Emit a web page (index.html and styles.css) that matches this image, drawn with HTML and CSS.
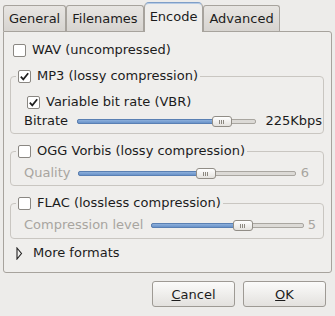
FILE: index.html
```html
<!DOCTYPE html>
<html>
<head>
<meta charset="utf-8">
<link rel="stylesheet" href="styles.css">
</head>
<body>
<div class="window">
  <div class="tabs">
    <div class="tab">General</div>
    <div class="tab">Filenames</div>
    <div class="tab active">Encode</div>
    <div class="tab">Advanced</div>
  </div>
  <div class="panel">
    <div class="row check-row wav">
      <span class="cb"></span><span class="lbl">WAV (uncompressed)</span>
    </div>

    <fieldset class="frame mp3">
      <legend class="legend"><span class="cb checked"><svg viewBox="0 0 13 13" width="13" height="13"><path d="M2.8 6.6 L5.3 9.4 L10.2 3.2" fill="none" stroke="#1e1e1e" stroke-width="1.7"/></svg></span><span class="lbl">MP3 (lossy compression)</span></legend>
      <div class="row check-row vbr">
        <span class="cb checked"><svg viewBox="0 0 13 13" width="13" height="13"><path d="M2.8 6.6 L5.3 9.4 L10.2 3.2" fill="none" stroke="#1e1e1e" stroke-width="1.7"/></svg></span><span class="lbl">Variable bit rate (VBR)</span>
      </div>
      <div class="row slider-row bitrate">
        <span class="slabel">Bitrate</span>
        <div class="track"><div class="fill" style="width:81%"></div><div class="thumb" style="left:calc(81% - 10px)"></div></div>
        <span class="value">225Kbps</span>
      </div>
    </fieldset>

    <fieldset class="frame ogg">
      <legend class="legend"><span class="cb"></span><span class="lbl">OGG Vorbis (lossy compression)</span></legend>
      <div class="row slider-row disabled quality">
        <span class="slabel">Quality</span>
        <div class="track"><div class="fill" style="width:59%"></div><div class="thumb" style="left:calc(59% - 10px)"></div></div>
        <span class="value">6</span>
      </div>
    </fieldset>

    <fieldset class="frame flac">
      <legend class="legend"><span class="cb"></span><span class="lbl">FLAC (lossless compression)</span></legend>
      <div class="row slider-row disabled complevel">
        <span class="slabel">Compression level</span>
        <div class="track"><div class="fill" style="width:60%"></div><div class="thumb" style="left:calc(60% - 10px)"></div></div>
        <span class="value">5</span>
      </div>
    </fieldset>

    <div class="row expander">
      <svg class="arrow" viewBox="0 0 7 13" width="7" height="13"><path d="M1 1 L5.5 6.5 L1 12 Z" fill="none" stroke="#222" stroke-width="1.1" stroke-linejoin="miter"/></svg>
      <span class="lbl">More formats</span>
    </div>
  </div>
  <div class="buttons">
    <button class="btn"><u>C</u>ancel</button>
    <button class="btn"><u>O</u>K</button>
  </div>
</div>
</body>
</html>
```

FILE: styles.css
```css
html, body {
  margin: 0;
  padding: 0;
  background: #edecea;
}
body {
  font-family: "DejaVu Sans", "Liberation Sans", sans-serif;
  font-size: 13px;
  line-height: 16px;
  color: #1c1c1c;
  width: 335px;
  height: 316px;
  overflow: hidden;
}
.window {
  padding-top: 2px;
}
.tabs {
  display: flex;
  align-items: flex-end;
  padding-left: 3px;
  height: 29px;
}
.tab {
  height: 16px;
  padding: 5px 5px 4px 5px;
  border: 1px solid #a7a39d;
  border-bottom: none;
  border-radius: 3px 3px 0 0;
  background: linear-gradient(#e7e5e2, #d7d4d0);
  color: #1c1c1c;
  white-space: nowrap;
}
.tab.active {
  position: relative;
  z-index: 1;
  height: 16px;
  padding: 6px 5px 7px 5px;
  margin-bottom: -1px;
  background: #efeeec;
  border-color: #a7a39d;
  border-top: 1px solid #7f9fc8;
  box-shadow: inset 0 1px 0 #b7cbe4;
  border-radius: 5px 5px 0 0;
}
.panel {
  margin: 0 3px;
  border: 1px solid #a7a39d;
  border-radius: 0 3px 3px 3px;
  background: #efeeec;
  padding: 10px 7px 11px 6px;
}
.row {
  display: flex;
  align-items: center;
}
.check-row {
  height: 16px;
}
.cb {
  width: 11px;
  height: 11px;
  flex: none;
  border: 1px solid #8a8782;
  border-radius: 2px;
  background: #ffffff;
  margin-right: 6px;
}
.cb svg {
  display: block;
  margin: -1px 0 0 -1px;
}
.wav {
  padding-left: 3px;
}
.frame {
  margin: 10px 0 0 0;
  padding: 0 0 3px 0;
  min-width: 0;
  border: 1px solid #c9c6c1;
  border-radius: 4px;
}
.legend {
  display: flex;
  align-items: center;
  height: 16px;
  padding: 0 2px 0 2px;
  margin-left: 5px;
}
.mp3 .vbr {
  margin-top: 10px;
  padding-left: 16px;
}
.ogg, .flac {
  margin-top: 9px;
}
.flac {
  padding-bottom: 4px;
}
.slider-row {
  height: 18px;
  padding-left: 13px;
}
.mp3 .slider-row {
  margin-top: 2px;
}
.ogg .slider-row, .flac .slider-row {
  margin-top: 5px;
}
.slabel {
  flex: none;
  margin-right: 9px;
}
.track {
  flex: 1;
  position: relative;
  height: 3px;
  border: 1px solid #a9a6a0;
  border-radius: 2px;
  background: #dcdad6;
}
.fill {
  height: 100%;
  margin: -1px 0 0 -1px;
  border: 1px solid #5a80b3;
  border-radius: 2px;
  background: linear-gradient(#8db0dc, #6a93c9);
}
.thumb {
  position: absolute;
  top: -4px;
  width: 18px;
  height: 9px;
  border: 1px solid #918d86;
  border-radius: 3px;
  background: linear-gradient(#ffffff, #e4e2de);
}
.thumb::after {
  content: "";
  position: absolute;
  left: 8px;
  top: 3px;
  width: 1px;
  height: 4px;
  background: #8c8880;
  box-shadow: 2px 0 0 #8c8880, -2px 0 0 #8c8880;
}
.value {
  flex: none;
}
.bitrate .value {
  margin-left: 9px;
  margin-right: 1px;
}
.quality .slabel {
  margin-right: 8px;
}
.quality .value {
  margin-left: 5px;
  margin-right: 14px;
}
.complevel .slabel {
  margin-right: 8px;
}
.complevel .value {
  margin-left: 4px;
  margin-right: 7px;
}
.disabled .slabel, .disabled .value {
  color: #a8a5a0;
}
.expander {
  margin-top: 6px;
  height: 16px;
  padding-left: 6px;
}
.arrow {
  display: block;
  margin-right: 10px;
}
.buttons {
  display: flex;
  justify-content: flex-end;
  gap: 8px;
  margin-top: 8px;
  padding-right: 9px;
}
.btn {
  width: 83px;
  height: 26px;
  font-family: "DejaVu Sans", "Liberation Sans", sans-serif;
  font-size: 13px;
  color: #1c1c1c;
  border: 1px solid #9e9a94;
  border-radius: 3px;
  background: linear-gradient(#fbfbfa, #e3e1de);
  padding: 0;
}
```
